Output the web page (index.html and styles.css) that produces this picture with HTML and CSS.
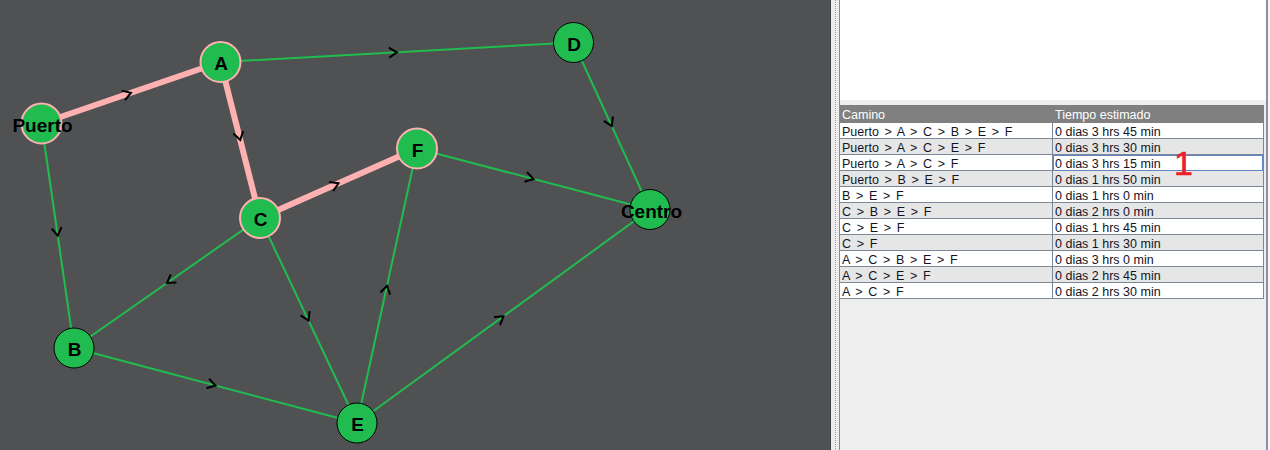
FILE: index.html
```html
<!DOCTYPE html>
<html lang="es">
<head>
<meta charset="utf-8">
<title>Rutas</title>
<link rel="stylesheet" href="styles.css">
</head>
<body>
<div class="app">
  <div class="canvas">
    <svg class="graph" width="830" height="450" viewBox="0 0 830 450" xmlns="http://www.w3.org/2000/svg">
      <g class="edges">
        <line class="edge" x1="220.5" y1="62" x2="573.5" y2="42.5"/>
        <line class="edge" x1="573.5" y1="42.5" x2="650" y2="209.5"/>
        <line class="edge" x1="417" y1="148.5" x2="650" y2="209.5"/>
        <line class="edge" x1="41.5" y1="123.5" x2="74" y2="348"/>
        <line class="edge" x1="260" y1="218" x2="74" y2="348"/>
        <line class="edge" x1="260" y1="218" x2="357" y2="423"/>
        <line class="edge" x1="74" y1="348" x2="357" y2="423"/>
        <line class="edge" x1="357" y1="423" x2="417" y2="148.5"/>
        <line class="edge" x1="357" y1="423" x2="650" y2="209.5"/>
        <line class="edge path" x1="41.5" y1="123.5" x2="220.5" y2="62"/>
        <line class="edge path" x1="220.5" y1="62" x2="260" y2="218"/>
        <line class="edge path" x1="260" y1="218" x2="417" y2="148.5"/>
      </g>
      <g class="arrows">
        <path transform="translate(131 92.75) rotate(-18.96)" d="M-8,-5 L0,0 L-8,5"/>
        <path transform="translate(240.25 140) rotate(75.79)" d="M-8,-5 L0,0 L-8,5"/>
        <path transform="translate(338.5 183.25) rotate(-23.88)" d="M-8,-5 L0,0 L-8,5"/>
        <path transform="translate(397 52.25) rotate(-3.16)" d="M-8,-5 L0,0 L-8,5"/>
        <path transform="translate(611.75 126) rotate(65.39)" d="M-8,-5 L0,0 L-8,5"/>
        <path transform="translate(533.5 179) rotate(14.67)" d="M-8,-5 L0,0 L-8,5"/>
        <path transform="translate(57.75 235.75) rotate(81.76)" d="M-8,-5 L0,0 L-8,5"/>
        <path transform="translate(167 283) rotate(145.05)" d="M-8,-5 L0,0 L-8,5"/>
        <path transform="translate(308.5 320.5) rotate(64.67)" d="M-8,-5 L0,0 L-8,5"/>
        <path transform="translate(215.5 385.5) rotate(14.84)" d="M-8,-5 L0,0 L-8,5"/>
        <path transform="translate(387 285.75) rotate(-77.67)" d="M-8,-5 L0,0 L-8,5"/>
        <path transform="translate(503.5 316.25) rotate(-36.08)" d="M-8,-5 L0,0 L-8,5"/>
      </g>
      <g class="nodes">
        <circle class="node on-path" cx="41.5" cy="123.5" r="20"/>
        <circle class="node on-path" cx="220.5" cy="62" r="20"/>
        <circle class="node on-path" cx="260" cy="218" r="20"/>
        <circle class="node on-path" cx="417" cy="148.5" r="20"/>
        <circle class="node" cx="573.5" cy="42.5" r="20"/>
        <circle class="node" cx="650" cy="209.5" r="20"/>
        <circle class="node" cx="74" cy="348" r="20"/>
        <circle class="node" cx="357" cy="423" r="20"/>
      </g>
      <g class="labels">
        <text x="42.5" y="132">Puerto</text>
        <text x="221" y="70">A</text>
        <text x="260.5" y="226">C</text>
        <text x="417.5" y="156.5">F</text>
        <text x="574" y="50.5">D</text>
        <text x="651.5" y="217.5">Centro</text>
        <text x="74.5" y="356">B</text>
        <text x="357.5" y="431">E</text>
      </g>
    </svg>
  </div>
  <div class="divider"></div>
  <div class="side">
    <div class="side-inner">
      <div class="info"></div>
      <div class="table-area">
        <div class="table">
          <div class="row head">
            <div class="cell">Camino</div>
            <div class="cell">Tiempo estimado</div>
          </div>
          <div class="row">
            <div class="cell route">Puerto &gt; A &gt; C &gt; B &gt; E &gt; F</div>
            <div class="cell">0 dias 3 hrs 45 min</div>
          </div>
          <div class="row alt">
            <div class="cell route">Puerto &gt; A &gt; C &gt; E &gt; F</div>
            <div class="cell">0 dias 3 hrs 30 min</div>
          </div>
          <div class="row">
            <div class="cell route">Puerto &gt; A &gt; C &gt; F</div>
            <div class="cell selected">0 dias 3 hrs 15 min</div>
          </div>
          <div class="row alt">
            <div class="cell route">Puerto &gt; B &gt; E &gt; F</div>
            <div class="cell">0 dias 1 hrs 50 min</div>
          </div>
          <div class="row">
            <div class="cell route">B &gt; E &gt; F</div>
            <div class="cell">0 dias 1 hrs 0 min</div>
          </div>
          <div class="row alt">
            <div class="cell route">C &gt; B &gt; E &gt; F</div>
            <div class="cell">0 dias 2 hrs 0 min</div>
          </div>
          <div class="row">
            <div class="cell route">C &gt; E &gt; F</div>
            <div class="cell">0 dias 1 hrs 45 min</div>
          </div>
          <div class="row alt">
            <div class="cell route">C &gt; F</div>
            <div class="cell">0 dias 1 hrs 30 min</div>
          </div>
          <div class="row">
            <div class="cell route">A &gt; C &gt; B &gt; E &gt; F</div>
            <div class="cell">0 dias 3 hrs 0 min</div>
          </div>
          <div class="row alt">
            <div class="cell route">A &gt; C &gt; E &gt; F</div>
            <div class="cell">0 dias 2 hrs 45 min</div>
          </div>
          <div class="row">
            <div class="cell route">A &gt; C &gt; F</div>
            <div class="cell">0 dias 2 hrs 30 min</div>
          </div>
        </div>
      </div>
    </div>
  </div>
</div>
<div class="mark">1</div>
</body>
</html>
```

FILE: styles.css
```css
html, body {
  margin: 0;
  padding: 0;
}
body {
  width: 1270px;
  height: 450px;
  overflow: hidden;
  position: relative;
  background: #ffffff;
  font-family: "Liberation Sans", Arial, sans-serif;
}
.app {
  display: flex;
  width: 1270px;
  height: 450px;
}
.canvas {
  width: 830px;
  height: 450px;
  flex: none;
  background: #505153;
}
.graph {
  display: block;
}
.edge {
  stroke: #21bc4f;
  stroke-width: 2;
}
.edge.path {
  stroke: #ffb1b1;
  stroke-width: 6;
}
.arrows path {
  fill: none;
  stroke: #000000;
  stroke-width: 2;
}
.node {
  fill: #21bc4f;
  stroke: #000000;
  stroke-width: 1;
}
.node.on-path {
  stroke: #ffb1b1;
  stroke-width: 2;
}
.labels text {
  font-family: "Liberation Sans", Arial, sans-serif;
  font-weight: bold;
  font-size: 19px;
  fill: #000000;
  text-anchor: middle;
}
.divider {
  width: 9px;
  flex: none;
  box-sizing: border-box;
  border-left: 1px solid #3f4042;
  background-color: #ececec;
  background-image: linear-gradient(#9c9c9c 50%, transparent 50%);
  background-size: 1px 2px;
  background-position: 4px 0;
  background-repeat: repeat-y;
}
.side {
  width: 431px;
  flex: none;
  box-sizing: border-box;
  border-left: 1px solid #7d8a99;
  background: #f7f7f7;
}
.side-inner {
  width: 426px;
  height: 450px;
  border-right: 2px solid #8592a1;
  display: flex;
  flex-direction: column;
}
.info {
  height: 100px;
  flex: none;
  background: #ffffff;
}
.table-area {
  flex: 1;
  background: #eeeeee;
  padding-top: 5px;
}
.table {
  width: 424px;
  font-size: 12.5px;
  color: #14141e;
}
.row {
  display: grid;
  grid-template-columns: 213px 211px;
  height: 16px;
  background: #ffffff;
}
.row.alt {
  background: #e6e6e6;
}
.cell {
  box-sizing: border-box;
  border-right: 1px solid #7a8898;
  border-bottom: 1px solid #7a8898;
  padding: 3px 0 0 2px;
  line-height: 12px;
  white-space: nowrap;
  overflow: hidden;
}
.route {
  word-spacing: 2.2px;
}
.row.head {
  height: 18px;
  background: #808080;
}
.row.head .cell {
  border: none;
  color: #ffffff;
  padding-top: 2px;
  line-height: 16px;
}
.cell.selected {
  position: relative;
  overflow: visible;
}
.cell.selected::after {
  content: "";
  position: absolute;
  left: 0;
  top: 0;
  right: 0;
  bottom: -1px;
  border: 1px solid #6384c0;
}
.mark {
  position: absolute;
  left: 1174px;
  top: 146px;
  font-family: "Liberation Sans", Arial, sans-serif;
  font-size: 34px;
  line-height: 34px;
  color: #e8202a;
  -webkit-text-stroke: 0.6px #e8202a;
}
```
